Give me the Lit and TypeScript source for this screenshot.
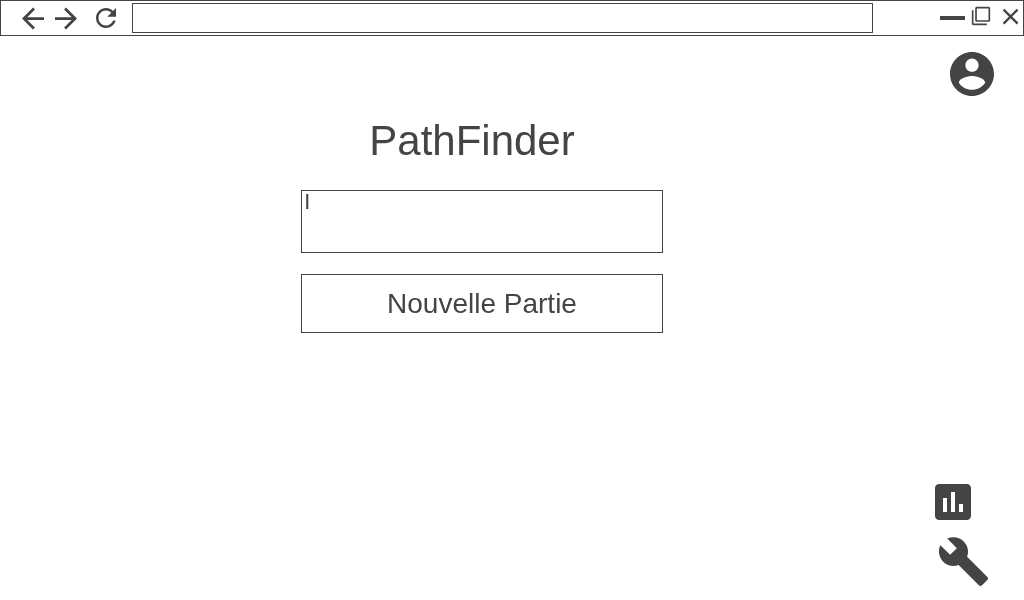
import { LitElement, html, css } from "lit";
import { customElement, state } from "lit/decorators.js";

@customElement("browser-bar")
class BrowserBar extends LitElement {
  static styles = css`
    :host {
      display: block;
      color: #444;
    }
    .bar {
      display: flex;
      align-items: flex-start;
      box-sizing: border-box;
      height: 36px;
      padding: 0 4px 0 21px;
      border: 1px solid #444;
      background: #fff;
    }
    button {
      display: block;
      margin: 0;
      padding: 0;
      border: 0;
      background: none;
      color: inherit;
      cursor: pointer;
    }
    svg {
      display: block;
      fill: currentColor;
    }
    .history {
      display: flex;
      gap: 11px;
      padding-top: 6px;
    }
    .reload {
      padding: 7px 16px 0 19px;
    }
    .address {
      flex: 1;
      min-width: 0;
      box-sizing: border-box;
      height: 30px;
      margin: 2px 0 0;
      padding: 0 8px;
      border: 1px solid #444;
      border-radius: 0;
      outline: none;
      background: #fff;
      color: inherit;
      font: 16px "Liberation Sans", Arial, sans-serif;
    }
    .window {
      display: flex;
      padding: 5px 0 0 67px;
    }
    .restore {
      margin: 0 11px 0 6px;
    }
  `;

  render() {
    return html`
      <header class="bar">
        <nav class="history" aria-label="Navigation">
          <button type="button" aria-label="Page précédente">
            <svg width="22" height="23" viewBox="4 4 16 16">
              <path d="M20 11H7.83l5.59-5.59L12 4l-8 8 8 8 1.41-1.41L7.83 13H20v-2z" />
            </svg>
          </button>
          <button type="button" aria-label="Page suivante">
            <svg width="22" height="23" viewBox="4 4 16 16">
              <path d="M12 4l-1.41 1.41L16.17 11H4v2h12.17l-5.58 5.59L12 20l8-8z" />
            </svg>
          </button>
        </nav>
        <div class="reload">
          <button type="button" aria-label="Actualiser">
            <svg width="20" height="20" viewBox="4 4 16 16">
              <path
                d="M17.65 6.35C16.2 4.9 14.21 4 12 4c-4.42 0-7.99 3.58-7.99 8s3.57 8 7.99 8c3.73 0 6.84-2.55 7.73-6h-2.08c-.82 2.33-3.04 4-5.65 4-3.31 0-6-2.69-6-6s2.69-6 6-6c1.66 0 3.14.69 4.22 1.78L13 11h7V4l-2.35 2.35z"
              />
            </svg>
          </button>
        </div>
        <input class="address" type="text" aria-label="Adresse" />
        <div class="window">
          <button type="button" aria-label="Réduire">
            <svg width="25" height="20" viewBox="0 0 25 20">
              <path d="M0 10h25v4H0z" />
            </svg>
          </button>
          <button class="restore" type="button" aria-label="Restaurer">
            <svg width="20" height="20" viewBox="0 0 24 24">
              <path
                d="M3 5H1v16c0 1.1.9 2 2 2h16v-2H3V5zm18-4H7c-1.1 0-2 .9-2 2v14c0 1.1.9 2 2 2h14c1.1 0 2-.9 2-2V3c0-1.1-.9-2-2-2zm0 16H7V3h14v14z"
              />
            </svg>
          </button>
          <button type="button" aria-label="Fermer">
            <svg width="17" height="20" viewBox="0 0 17 20">
              <path d="M1.6 3.6l14 14M15.6 3.6l-14 14" fill="none" stroke="currentColor" stroke-width="2.3" />
            </svg>
          </button>
        </div>
      </header>
    `;
  }
}

@customElement("app-root")
class AppRoot extends LitElement {
  static styles = css`
    :host {
      display: flex;
      flex-direction: column;
      min-height: 100vh;
      color: #444;
      font-family: "Liberation Sans", Arial, sans-serif;
    }
    .page {
      flex: 1;
      display: flex;
      will-change: transform;
    }
    .start {
      flex: 1;
      min-width: 0;
      display: flex;
      flex-direction: column;
      align-items: center;
      padding: 81px 0 0 29px;
    }
    .title {
      margin: 0 0 25px;
      padding-right: 20px;
      font-size: 42px;
      font-weight: 400;
      line-height: 48px;
    }
    .name,
    .play {
      display: block;
      box-sizing: border-box;
      width: 362px;
      max-width: 100%;
      border: 1px solid #444;
      border-radius: 0;
      background: none;
      color: inherit;
      font-family: inherit;
    }
    .name {
      height: 63px;
      margin: 0 0 21px;
      padding: 0 3px;
      outline: none;
      resize: none;
      font-size: 16px;
      font-weight: 700;
      line-height: 20px;
    }
    .play {
      height: 59px;
      margin: 0;
      padding: 0;
      font-size: 28px;
      line-height: 32px;
      cursor: pointer;
    }
    .rail {
      display: flex;
      flex-direction: column;
      justify-content: space-between;
      width: 89px;
      box-sizing: border-box;
      padding: 16px 0 14px;
    }
    .icon {
      display: block;
      margin: 0;
      padding: 0;
      border: 0;
      background: none;
      color: inherit;
      cursor: pointer;
    }
    .icon svg {
      display: block;
      fill: currentColor;
    }
    .account {
      align-self: flex-end;
      margin-right: 30px;
    }
    .tools {
      display: flex;
      flex-direction: column;
      align-items: flex-start;
      gap: 17px;
    }
    .settings {
      padding: 0 4px;
    }
  `;

  @state() private name = "|";

  render() {
    return html`
      <browser-bar></browser-bar>
      <main class="page">
        <form class="start" @submit=${(e: Event) => e.preventDefault()}>
          <h1 class="title">PathFinder</h1>
          <textarea
            class="name"
            aria-label="Nom"
            .value=${this.name}
            @input=${(e: Event) => (this.name = (e.target as HTMLTextAreaElement).value)}
          ></textarea>
          <button class="play" type="submit">Nouvelle Partie</button>
        </form>
        <aside class="rail">
          <button class="icon account" type="button" aria-label="Compte">
            <svg width="44" height="44" viewBox="2 2 20 20">
              <path
                d="M12 2C6.48 2 2 6.48 2 12s4.48 10 10 10 10-4.48 10-10S17.52 2 12 2zm0 3c1.66 0 3 1.34 3 3s-1.34 3-3 3-3-1.34-3-3 1.34-3 3-3zm0 14.2c-2.5 0-4.71-1.28-6-3.22.03-1.99 4-3.08 6-3.08 1.99 0 5.97 1.09 6 3.08-1.29 1.94-3.5 3.22-6 3.22z"
              />
            </svg>
          </button>
          <div class="tools">
            <button class="icon" type="button" aria-label="Statistiques">
              <svg width="36" height="36" viewBox="3 3 18 18">
                <path
                  d="M19 3H5c-1.1 0-2 .9-2 2v14c0 1.1.9 2 2 2h14c1.1 0 2-.9 2-2V5c0-1.1-.9-2-2-2zM9 17H7v-7h2v7zm4 0h-2V7h2v10zm4 0h-2v-4h2v4z"
                />
              </svg>
            </button>
            <button class="icon settings" type="button" aria-label="Paramètres">
              <svg width="49" height="49" viewBox="1 1 22 22">
                <path
                  d="M22.7 19l-9.1-9.1c.9-2.3.4-5-1.5-6.9-2-2-5-2.4-7.4-1.3L9 6 6 9 1.6 4.7C.4 7.1.9 10.1 2.9 12.1c1.9 1.9 4.6 2.4 6.9 1.5l9.1 9.1c.4.4 1 .4 1.4 0l2.3-2.3c.5-.4.5-1.1.1-1.4z"
                />
              </svg>
            </button>
          </div>
        </aside>
      </main>
    `;
  }
}
